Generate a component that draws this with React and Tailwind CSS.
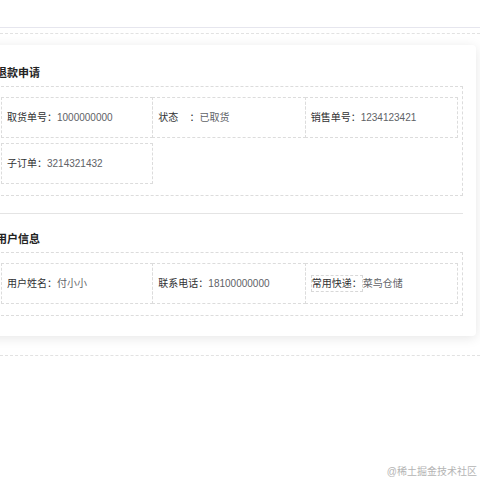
const refundRows = [
  { label: "取货单号：", value: "1000000000" },
  { label: "状态    ：", value: "已取货" },
  { label: "销售单号：", value: "1234123421" },
  { label: "子订单：", value: "3214321432" },
];

const userRows = [
  { label: "用户姓名：", value: "付小小" },
  { label: "联系电话：", value: "18100000000" },
  { label: "常用快递：", value: "菜鸟仓储", boxed: true },
];

function Cell({ item, index }) {
  return (
    <div
      className={`h-[41px] flex items-center pl-[5px] border border-dashed border-[#dcdcdc] whitespace-pre ${index % 3 !== 0 ? "-ml-px" : ""}`}
    >
      {item.boxed ? (
        <span className="h-[17px] flex items-center border border-dashed border-[#d8d8d8] text-[#303133]">
          {item.label}
        </span>
      ) : (
        <span className="text-[#303133]">{item.label}</span>
      )}
      <span className="text-[#606266]">{item.value}</span>
    </div>
  );
}

function Section({ title, rows }) {
  return (
    <div>
      <div className="h-[16px] leading-[16px] text-[11px] font-bold text-[#222]">
        {title}
      </div>

      <div className="mt-[5px] border border-dashed border-[#dcdcdc] px-[4px] pt-[10px] pb-[11px]">
        <div className="grid grid-cols-3 gap-y-[5px]">
          {rows.map((item, i) => (
            <Cell key={item.label} item={item} index={i} />
          ))}
        </div>
      </div>
    </div>
  );
}

export default function App() {
  return (
    <div
      className="relative w-[480px] h-[480px] overflow-hidden bg-white text-[10px]"
      style={{ fontFamily: '"Liberation Sans", "Noto Sans CJK SC", sans-serif' }}
    >
      <div className="h-[28px] border-b border-[#e6e6ee]" />

      <div className="mt-[5px] border-t border-b border-dashed border-[#e2e2e2] pt-[11px] pb-[19px]">
        <div className="ml-[-17px] w-[493px] bg-white rounded-[4px] shadow-[0_2px_12px_0_rgba(0,0,0,0.1)] pl-[13px] pr-[13px] pt-[20px] pb-[20px]">
          <Section title="退款申请" rows={refundRows} />

          <div className="mt-[17px] h-px bg-[#e4e4e4]" />

          <div className="mt-[17px]">
            <Section title="用户信息" rows={userRows} />
          </div>
        </div>
      </div>

      <div className="absolute right-[3px] top-[464px] text-[10px] text-[#b4b4b4]">
        @稀土掘金技术社区
      </div>
    </div>
  );
}
